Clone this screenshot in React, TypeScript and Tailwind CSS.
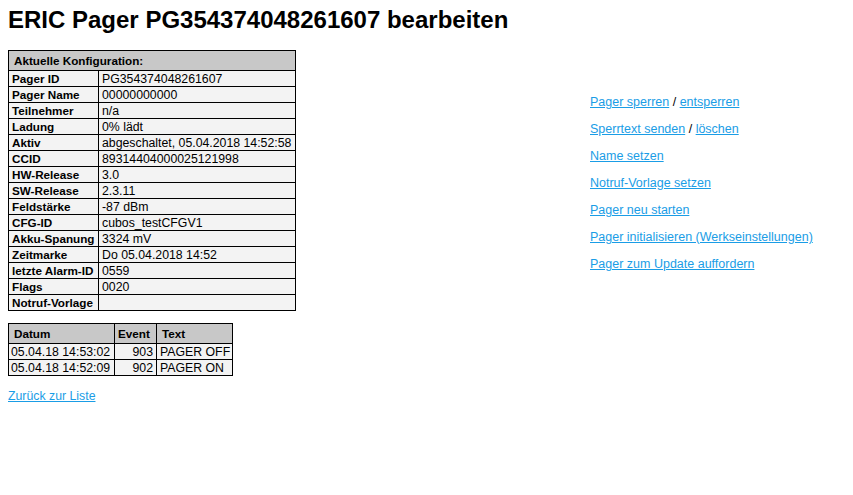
import React from 'react';

const config: [string, string][] = [
  ['Pager ID', 'PG354374048261607'],
  ['Pager Name', '00000000000'],
  ['Teilnehmer', 'n/a'],
  ['Ladung', '0% lädt'],
  ['Aktiv', 'abgeschaltet, 05.04.2018 14:52:58'],
  ['CCID', '89314404000025121998'],
  ['HW-Release', '3.0'],
  ['SW-Release', '2.3.11'],
  ['Feldstärke', '-87 dBm'],
  ['CFG-ID', 'cubos_testCFGV1'],
  ['Akku-Spanung', '3324 mV'],
  ['Zeitmarke', 'Do 05.04.2018 14:52'],
  ['letzte Alarm-ID', '0559'],
  ['Flags', '0020'],
  ['Notruf-Vorlage', ''],
];

const events = [
  { datum: '05.04.18 14:53:02', event: '903', text: 'PAGER OFF' },
  { datum: '05.04.18 14:52:09', event: '902', text: 'PAGER ON' },
];

const linkCls = 'text-[#1a9de6] underline';

export default function App() {
  return (
    <div className="min-h-screen bg-white px-2 pt-[6px] text-[12.3px] leading-[14px] text-black font-['Liberation_Sans',Arial,sans-serif]">
      <h1 className="text-[24px] font-bold leading-[28px] mb-[16px]">ERIC Pager PG354374048261607 bearbeiten</h1>

      <div className="flex items-center">
        <table className="border-collapse border border-black w-[288px] table-fixed">
          <colgroup>
            <col className="w-[90px]" />
            <col />
          </colgroup>
          <thead>
            <tr className="bg-[#c8c8c8] h-[20px]">
              <th colSpan={2} className="border border-black text-left font-bold text-[11.7px] px-[5px]">Aktuelle Konfiguration:</th>
            </tr>
          </thead>
          <tbody>
            {config.map(([label, value]) => (
              <tr key={label} className="bg-[#f3f3f3] h-[16px]">
                <td className="border border-black font-bold text-[11.7px] pl-[3px] pr-0 whitespace-nowrap">{label}</td>
                <td className="border border-black px-[3px] whitespace-nowrap">{value}</td>
              </tr>
            ))}
          </tbody>
        </table>

        <div className="ml-[294px] flex flex-col gap-[13px] pt-[4px] text-[12.5px]">
          <div>
            <a href="#" className={linkCls}>Pager sperren</a> / <a href="#" className={linkCls}>entsperren</a>
          </div>
          <div>
            <a href="#" className={linkCls}>Sperrtext senden</a> / <a href="#" className={linkCls}>löschen</a>
          </div>
          <div><a href="#" className={linkCls}>Name setzen</a></div>
          <div><a href="#" className={linkCls}>Notruf-Vorlage setzen</a></div>
          <div><a href="#" className={linkCls}>Pager neu starten</a></div>
          <div><a href="#" className={linkCls}>Pager initialisieren (Werkseinstellungen)</a></div>
          <div><a href="#" className={linkCls}>Pager zum Update auffordern</a></div>
        </div>
      </div>

      <table className="border-collapse border border-black mt-[12px]">
        <thead>
          <tr className="bg-[#c8c8c8] h-[20px]">
            <th className="border border-black text-left font-bold text-[11.7px] px-[5px] w-[106px]">Datum</th>
            <th className="border border-black text-left font-bold text-[11.7px] px-[3px] w-[42px]">Event</th>
            <th className="border border-black text-left font-bold text-[11.7px] px-[5px]">Text</th>
          </tr>
        </thead>
        <tbody>
          {events.map((e) => (
            <tr key={e.datum} className="bg-[#f3f3f3] h-[16px]">
              <td className="border border-black px-[2px] whitespace-nowrap">{e.datum}</td>
              <td className="border border-black px-[3px] text-right">{e.event}</td>
              <td className="border border-black pl-[3px] pr-[2px] whitespace-nowrap">{e.text}</td>
            </tr>
          ))}
        </tbody>
      </table>

      <div className="mt-[13px]">
        <a href="#" className={linkCls}>Zurück zur Liste</a>
      </div>
    </div>
  );
}
